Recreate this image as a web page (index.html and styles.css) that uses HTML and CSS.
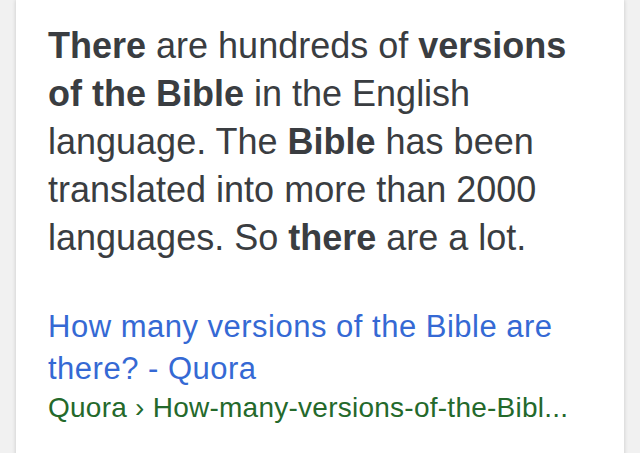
FILE: index.html
```html
<!DOCTYPE html>
<html lang="en">
<head>
<meta charset="utf-8">
<title>Bible versions</title>
<link rel="stylesheet" href="styles.css">
</head>
<body>
<div class="card">
  <p class="answer"><b>There</b> are hundreds of <b>versions of the Bible</b> in the English language. The <b>Bible</b> has been translated into more than 2000 languages. So <b>there</b> are a lot.</p>
  <a class="title" href="#">How many versions of the Bible are there? - Quora</a>
  <div class="crumb">Quora › How-many-versions-of-the-Bibl...</div>
</div>
</body>
</html>
```
FILE: styles.css
```css
html, body {
  margin: 0;
  padding: 0;
  background: #f1f1f1;
  height: 100%;
  overflow: hidden;
}
body {
  font-family: "Liberation Sans", Arial, sans-serif;
}
.card {
  margin: 0 16px;
  background: #fff;
  box-shadow: 0 0 4px rgba(0, 0, 0, 0.18);
  padding: 22px 32px 40px 32px;
  min-height: 100%;
  box-sizing: border-box;
}
.answer {
  margin: 0;
  font-size: 36px;
  line-height: 48px;
  color: #3a3d41;
}
.answer b {
  font-weight: bold;
}
.title {
  display: block;
  margin-top: 44px;
  font-size: 31px;
  letter-spacing: 0.5px;
  line-height: 42px;
  color: #3569d4;
  text-decoration: none;
}
.crumb {
  font-size: 28px;
  letter-spacing: 0.25px;
  line-height: 36px;
  color: #24692b;
  white-space: nowrap;
}
```
